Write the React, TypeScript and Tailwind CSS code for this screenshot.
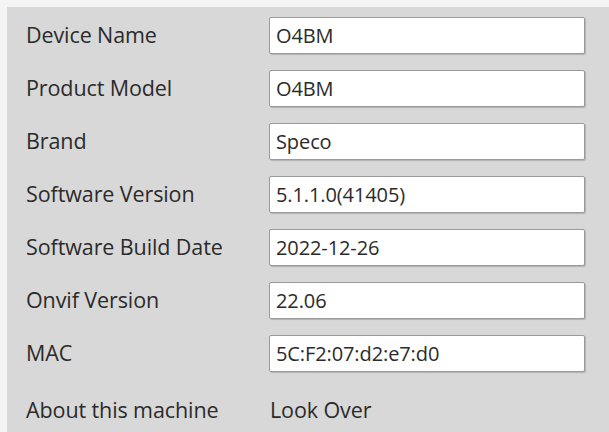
import React from "react";

const rows: [string, string][] = [
  ["Device Name", "O4BM"],
  ["Product Model", "O4BM"],
  ["Brand", "Speco"],
  ["Software Version", "5.1.1.0(41405)"],
  ["Software Build Date", "2022-12-26"],
  ["Onvif Version", "22.06"],
  ["MAC", "5C:F2:07:d2:e7:d0"],
];

export default function App() {
  return (
    <div className="w-[609px] h-[432px] bg-[#f4f4f4] pl-[7px] pt-[7px] overflow-hidden" style={{ fontFamily: '"Open Sans", "Noto Sans", sans-serif' }}>
      <div className="w-full h-full bg-[#d8d8d8] pl-[19px] pt-[2px] text-[#2b2b2b] tracking-[-0.1px]">
        {rows.map(([label, value]) => (
          <div key={label} className="flex items-center h-[53px]">
            <div className="w-[243px] shrink-0 text-[21.5px]">{label}</div>
            <div className="w-[316px] h-[37px] bg-white border border-[#9a9a9a] rounded-[2px] flex items-center px-[6px] text-[20px] shadow-[1px_1px_1px_rgba(0,0,0,0.18)]">
              {value}
            </div>
          </div>
        ))}
        <div className="flex items-center h-[60px] text-[21.5px]">
          <div className="w-[244px] shrink-0">About this machine</div>
          <div>Look Over</div>
        </div>
      </div>
    </div>
  );
}
